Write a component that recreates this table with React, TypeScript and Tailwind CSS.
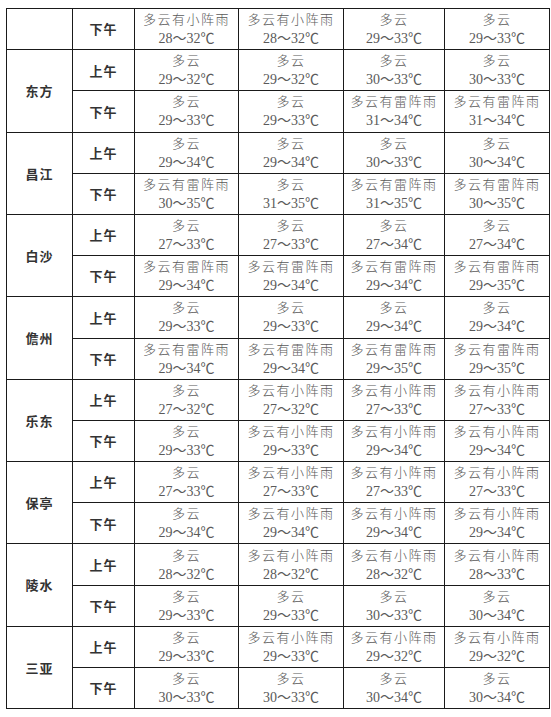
import React from "react";

type Cell = [string, string];
type Row = { region: string; half: string; cells: Cell[]; first?: boolean };

const D = "多云";
const X = "多云有小阵雨";
const L = "多云有雷阵雨";

const rows: Row[] = [
  { region: "", half: "下午", first: true, cells: [[X, "28～32"], [X, "28～32"], [D, "29～33"], [D, "29～33"]] },
  { region: "东方", half: "上午", first: true, cells: [[D, "29～32"], [D, "29～32"], [D, "30～33"], [D, "30～33"]] },
  { region: "东方", half: "下午", cells: [[D, "29～33"], [D, "29～33"], [L, "31～34"], [L, "31～34"]] },
  { region: "昌江", half: "上午", first: true, cells: [[D, "29～34"], [D, "29～34"], [D, "30～33"], [D, "30～34"]] },
  { region: "昌江", half: "下午", cells: [[L, "30～35"], [D, "31～35"], [L, "31～35"], [L, "30～35"]] },
  { region: "白沙", half: "上午", first: true, cells: [[D, "27～33"], [D, "27～33"], [D, "27～34"], [D, "27～34"]] },
  { region: "白沙", half: "下午", cells: [[L, "29～34"], [L, "29～34"], [L, "29～34"], [L, "29～35"]] },
  { region: "儋州", half: "上午", first: true, cells: [[D, "29～33"], [D, "29～33"], [D, "29～34"], [D, "29～34"]] },
  { region: "儋州", half: "下午", cells: [[L, "29～34"], [L, "29～34"], [L, "29～35"], [L, "29～35"]] },
  { region: "乐东", half: "上午", first: true, cells: [[D, "27～32"], [X, "27～32"], [X, "27～33"], [X, "27～33"]] },
  { region: "乐东", half: "下午", cells: [[D, "29～33"], [X, "29～33"], [X, "29～34"], [X, "29～34"]] },
  { region: "保亭", half: "上午", first: true, cells: [[D, "27～33"], [X, "27～33"], [X, "27～33"], [X, "27～33"]] },
  { region: "保亭", half: "下午", cells: [[D, "29～34"], [X, "29～34"], [X, "29～34"], [X, "29～34"]] },
  { region: "陵水", half: "上午", first: true, cells: [[D, "28～32"], [X, "28～32"], [X, "28～32"], [X, "28～33"]] },
  { region: "陵水", half: "下午", cells: [[D, "29～33"], [D, "29～33"], [D, "30～33"], [D, "30～34"]] },
  { region: "三亚", half: "上午", first: true, cells: [[D, "29～33"], [X, "29～33"], [X, "29～32"], [X, "29～32"]] },
  { region: "三亚", half: "下午", cells: [[D, "30～33"], [D, "30～33"], [D, "30～34"], [D, "30～34"]] },
];

const widths = ["w-[66px]", "w-[62px]", "w-[104px]", "w-[105px]", "w-[101px]", "w-[105px]"];

export default function App() {
  return (
    <div className="min-h-[717px] w-[551px] bg-white pl-[6px] pt-[8px]">
      <table
        className="w-[543px] table-fixed border-collapse border border-[#1a1a1a]"
        style={{ fontFamily: '"Liberation Serif", "Noto Sans CJK SC", serif' }}
      >
        <colgroup>
          {widths.map((w, i) => (
            <col key={i} className={w} />
          ))}
        </colgroup>
        <tbody>
          {rows.map((r, i) => {
            const span = r.region === "" ? 1 : 2;
            return (
              <tr key={i} className="h-[41.2px]">
                {r.first && (
                  <td
                    rowSpan={span}
                    className="border border-[#1a1a1a] p-0 text-center align-middle text-[13px] font-bold tracking-[1px] text-[#333]"
                    style={{ fontFamily: '"Noto Sans CJK SC", sans-serif' }}
                  >
                    {r.region}
                  </td>
                )}
                <td
                  className="border border-[#1a1a1a] p-0 text-center align-middle text-[13px] font-bold tracking-[1px] text-[#333]"
                  style={{ fontFamily: '"Noto Sans CJK SC", sans-serif' }}
                >
                  {r.half}
                </td>
                {r.cells.map((c, j) => (
                  <td key={j} className="border border-[#1a1a1a] p-0 text-center align-middle text-[#5a5a5a]">
                    <div
                      className="text-[13px] font-light leading-[20px] tracking-[1.5px]"
                      style={{ fontFamily: '"Noto Sans CJK SC", sans-serif' }}
                    >
                      {c[0]}
                    </div>
                    <div className="text-[14px] leading-[20px]">
                      {c[1]}℃
                    </div>
                  </td>
                ))}
              </tr>
            );
          })}
        </tbody>
      </table>
    </div>
  );
}
